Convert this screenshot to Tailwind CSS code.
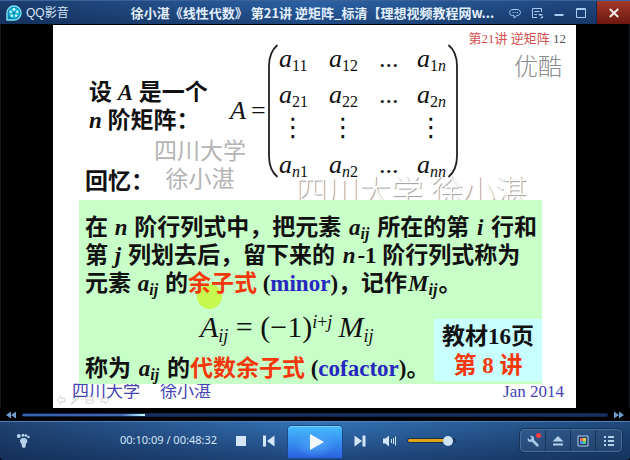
<!DOCTYPE html>
<html lang="zh-CN">
<head>
<meta charset="utf-8">
<meta name="viewport" content="width=device-width, initial-scale=1">
<title>QQ影音</title>
<script src="https://cdn.jsdelivr.net/npm/@tailwindcss/browser@4"></script>
</head>
<body class="flex min-h-screen flex-col overflow-hidden bg-black font-['Liberation_Sans','Noto_Sans_CJK_SC',sans-serif]">

<!-- Title bar -->
<header class="flex h-6 items-center border-t border-[#3a6299] bg-[linear-gradient(to_bottom,transparent,rgba(8,24,60,0.35)),linear-gradient(to_right,#1b3c6c,#2c63a6_50%,#1c4377)]">
  <div class="flex w-32 shrink-0 items-center gap-1 pl-[6px]">
    <svg class="size-4" viewBox="0 0 16 16" aria-hidden="true">
      <path d="M1 15V8a7 7 0 1 1 7 7z" fill="#0b7fae" stroke="#7be6f7" stroke-width="1.4"/>
      <circle cx="8" cy="8" r="5.4" fill="#12b5dc"/>
      <g fill="#d9fbff"><circle cx="8" cy="4.4" r="1.3"/><circle cx="11.4" cy="6.8" r="1.3"/><circle cx="10.2" cy="10.8" r="1.3"/><circle cx="5.8" cy="10.8" r="1.3"/><circle cx="4.6" cy="6.8" r="1.3"/></g>
      <circle cx="8" cy="8" r=".9" fill="#07506f"/>
    </svg>
    <span class="text-xs leading-5 text-[#d5e6fa]">QQ影音</span>
  </div>
  <h1 class="min-w-0 flex-1 truncate text-center font-['Noto_Sans_CJK_SC',sans-serif] text-[13px] leading-5 font-bold text-[#e2effc]">徐小湛《线性代数》 第21讲 逆矩阵_标清【理想视频教程网w...</h1>
  <div class="flex h-full shrink-0 items-center pl-[7px] text-[#a9cdf0]">
    <button aria-label="反馈" class="flex h-full w-[22px] items-center justify-center"><svg class="size-3" viewBox="0 0 12 12" fill="none" stroke="currentColor"><path d="M3.500 8.500C1.500 8.500.6 7.300.6 5.500S1.800 2.500 4 2.500h4c2.200 0 3.400 1.200 3.400 3S10 8.500 8 8.500L5 11V8.500z"/><path d="M3.500 5.500h1m1.200 0h1m1.200 0h1"/></svg></button>
    <button aria-label="菜单" class="flex h-full w-[22px] items-center justify-center"><svg class="size-3" viewBox="0 0 12 12" fill="none" stroke="currentColor"><path d="M10.500 5V1.500h-9v9H6M3.500 4.500h5M3.500 7.500h2.500"/><path d="M7 7h5l-2.500 2.200zM9 11.500L12 11V8.500z" fill="currentColor" stroke="none"/></svg></button>
    <button aria-label="最小化" class="flex h-full w-[22px] items-center justify-center"><svg class="size-3" viewBox="0 0 12 12"><path d="M1.500 7h9v2h-9z" fill="currentColor"/></svg></button>
    <button aria-label="最大化" class="flex h-full w-[22px] items-center justify-center"><svg class="size-3" viewBox="0 0 12 12" fill="none" stroke="currentColor"><path d="M1.500 1.500h9v9h-9zM1.500 2.500h9"/></svg></button>
    <button aria-label="关闭" class="ml-1 flex h-full w-[34px] items-center justify-center border-l border-[#142c52] bg-gradient-to-b from-[#a1392a] to-[#6d1710]"><svg class="size-3" viewBox="0 0 12 12" fill="none" stroke="#f3ece9" stroke-width="2"><path d="M1.800 2l8.400 8M10.200 2L1.800 10"/></svg></button>
  </div>
</header>

<!-- Video frame -->
<main class="flex flex-1 flex-col border-x border-[#14181f] pt-px">
  <article class="relative mr-[53px] ml-[52px] flex flex-1 flex-col overflow-hidden bg-[#fefffe] font-['Liberation_Serif','Noto_Sans_CJK_SC',serif] text-[#111]">
    <section class="relative flex h-[175px]">
      <p class="absolute top-[149px] left-[242px] text-[32px] leading-9 font-light whitespace-nowrap text-white [text-shadow:1px_1px_1px_#999]">四川大学 徐小湛</p>
      <p class="absolute top-[113px] left-[101px] text-center text-[23px] leading-7 text-[#b4b4b4]">四川大学<br>徐小湛</p>

      <div class="w-[177px] shrink-0 pt-[54px] pl-8 text-[23px] leading-7 font-bold whitespace-nowrap">
        <p class="pl-1">设 <i>A</i> 是一个</p>
        <p class="pl-1"><i>n</i> 阶矩阵：</p>
        <p class="pt-[33px]">回忆：</p>
      </div>

      <div class="relative mt-[19px] flex h-[134px] items-center text-[26px] leading-6">
        <span class="w-[37px] whitespace-nowrap"><i>A</i>&thinsp;=</span>
        <svg class="h-[134px] w-3" viewBox="0 0 12 134" fill="none" stroke="#222" stroke-width="1.800" aria-hidden="true"><path d="M10.500 1C4.500 6 2 12 2 22v90c0 10 2.500 16 8.500 21"/></svg>
        <div class="grid h-full grid-cols-[50px_50px_38px_30px] grid-rows-[36px_32px_38px_25px] items-start pt-[3px] [&_sub]:text-base">
          <span><i>a</i><sub>11</sub></span><span><i>a</i><sub>12</sub></span><span>...</span><span><i>a</i><sub>1<i>n</i></sub></span>
          <span><i>a</i><sub>21</sub></span><span><i>a</i><sub>22</sub></span><span>...</span><span><i>a</i><sub>2<i>n</i></sub></span>
          <span class="pl-px font-['DejaVu_Sans']">⋮</span><span class="pl-px font-['DejaVu_Sans']">⋮</span><span></span><span class="pl-px font-['DejaVu_Sans']">⋮</span>
          <span><i>a</i><sub><i>n</i>1</sub></span><span><i>a</i><sub><i>n</i>2</sub></span><span>...</span><span><i>a</i><sub><i>nn</i></sub></span>
        </div>
        <svg class="h-[134px] w-3" viewBox="0 0 12 134" fill="none" stroke="#222" stroke-width="1.800" aria-hidden="true"><path d="M1.500 1C7.500 6 10 12 10 22v90c0 10-2.500 16-8.500 21"/></svg>
      </div>

      <div class="absolute top-1 right-[10px] flex flex-col items-end">
        <p class="text-[13px] leading-5 text-[#555]"><span class="text-[#d4504c]">第21讲 逆矩阵</span> 12</p>
        <p class="pr-1 font-['Noto_Sans_CJK_SC',sans-serif] text-2xl leading-8 font-light text-[#8a8a8a]">优酷</p>
      </div>
    </section>

    <section class="relative z-10 mr-[34px] ml-[26px] h-[184px] bg-[#c8ffc8] pt-[14px] pl-[6px] text-[23px] leading-7 font-bold whitespace-nowrap [&_sub]:text-base">
      <span class="absolute top-[84px] left-[118px] size-[25px] rounded-full bg-[#c6f84f]"></span>
      <p>在 <i class="mx-px">n</i> 阶行列式中，把元素 <i class="mx-[2px]">a<sub>ij</sub></i> 所在的第 <i class="mx-[2px]">i</i> 行和</p>
      <p>第 <i class="mx-px">j</i> 列划去后，留下来的 <i class="mx-[2px]">n</i>-1 阶行列式称为</p>
      <p class="relative">元素 <i class="mx-px">a<sub>ij</sub></i> 的<span class="text-[#f5380c]">余子式</span> (<span class="text-[#2626c0]">minor</span>)，记作<i class="mx-px">M<sub>ij</sub></i>。</p>
      <p class="pl-[115px] text-[30px] leading-[57px] font-normal [&_sub]:text-lg [&_sup]:text-lg"><i>A<sub>ij</sub></i> = (−1)<sup><i>i</i>+<i>j</i></sup>&thinsp;<i>M<sub>ij</sub></i></p>
      <p>称为 <i class="mx-[2px]">a<sub>ij</sub></i> 的<span class="text-[#f5380c]">代数余子式</span> (<span class="text-[#2626c0]">cofactor</span>)。</p>
      <aside class="absolute right-0 bottom-[3px] w-[108px] bg-[#c8ffff] pt-[3px] pb-px text-center leading-[29px]">
        <p>教材16页</p>
        <p class="text-[#f5380c]">第 8 讲</p>
      </aside>
    </section>

    <footer class="relative flex flex-1 items-start justify-between pr-3 pl-[19px] text-[17px] leading-4 text-[#4343b4]">
      <span>四川大学<span class="pl-5">徐小湛</span></span>
      <span>Jan 2014</span>
      <svg class="absolute top-[10px] left-[3px] h-3 w-[54px]" viewBox="0 0 54 12" fill="#fff" stroke="#d4d4d4" aria-hidden="true"><path d="M1 6l4-4v2.500h4v3H5V10zM15 10l7-7 1 1-7 6zM30 3h7v6h-7zM30 6h7M53 6l-4-4v2.500h-4v3h4V10z"/></svg>
    </footer>
  </article>
</main>

<!-- Seek bar -->
<div class="flex h-[13px] items-center gap-[6px] px-[6px]">
  <button aria-label="快退" class="w-[10px] shrink-0 text-[#6f9dce]"><svg class="h-2 w-[10px]" viewBox="0 0 10 8" fill="currentColor"><path d="M5 .5v7L0 4zM10 .5v7L5 4z"/></svg></button>
  <input type="range" aria-label="播放进度" min="0" max="2912" value="609" class="h-1 min-w-0 flex-1 appearance-none rounded-sm border-y border-[#10264a] bg-[linear-gradient(to_right,#3560ae,#4166b4_17%,#b8f2ff_20.500%,#dcfaff_21%,#17305f_21%,#17305f)] [&::-webkit-slider-thumb]:size-1 [&::-webkit-slider-thumb]:appearance-none">
  <button aria-label="快进" class="w-[10px] shrink-0 text-[#6f9dce]"><svg class="h-2 w-[10px]" viewBox="0 0 10 8" fill="currentColor"><path d="M0 .5v7L5 4zM5 .5v7L10 4z"/></svg></button>
</div>

<!-- Transport controls -->
<div class="grid h-[39px] grid-cols-[1fr_56px_1fr] rounded-b border-t border-[#4a7fbd] bg-[linear-gradient(to_bottom,transparent,rgba(14,32,72,0.55)),linear-gradient(to_right,#1f4270,#3474b8_50%,#1f4878)] text-[#d3e6f8]">
  <div class="flex items-center pr-3 pb-px pl-4">
    <button aria-label="工具脚印"><svg class="h-4 w-[14px]" viewBox="0 0 14 16" fill="#b9d3ee"><circle cx="2.800" cy="3" r="1.900"/><circle cx="7" cy="2.300" r="1.500"/><circle cx="10" cy="2.600" r="1.300"/><circle cx="12.400" cy="4" r="1.200"/><path d="M4 8c0-2 1.400-3 3.600-3s3.700 1.100 3.700 3-1.600 2.400-1.600 3.800.2 3.200-1.900 3.200-2-2-2-3.200S4 9.600 4 8z"/></svg></button>
    <span class="ml-auto font-['Noto_Sans'] text-[11px] whitespace-nowrap">00:10:09 / 00:48:32</span>
    <button aria-label="停止" class="ml-[18px]"><svg class="size-3" viewBox="0 0 12 12" fill="currentColor"><path d="M1 1h10v10H1z"/></svg></button>
    <button aria-label="上一个" class="ml-4"><svg class="size-3" viewBox="0 0 12 12" fill="currentColor"><path d="M0 .5h3v11H0zM11.500.5v11L4 6z"/></svg></button>
  </div>
  <button aria-label="播放" class="mt-[3px] mb-px flex items-center justify-center rounded-t border border-[#1b4a8c] bg-[radial-gradient(ellipse_at_50%_55%,#4da5f8,transparent_55%),linear-gradient(to_bottom,#45bcff,#2a62e0)] shadow-[inset_0_1px_0_#7ad4ff]"><svg class="ml-1 h-4 w-[14px]" viewBox="0 0 14 16" fill="#f2f9ff"><path d="M0 0l14 8-14 8z"/></svg></button>
  <div class="flex items-center pr-2 pb-px pl-[11px]">
    <button aria-label="下一个"><svg class="size-3" viewBox="0 0 12 12" fill="currentColor"><path d="M8.500.5h3v11h-3zM.5.5v11L8 6z"/></svg></button>
    <button aria-label="音量" class="ml-[17px]"><svg class="h-3 w-[14px]" viewBox="0 0 14 12" fill="currentColor"><path d="M0 3.500h2.500L6 .5v11L2.500 8.500H0z"/><path d="M8.500 4v4M10.500 3v6M12.500 1.500v9" stroke="currentColor" fill="none"/></svg></button>
    <input type="range" aria-label="音量大小" min="0" max="100" value="95" class="ml-[10px] h-[5px] w-[49px] appearance-none rounded-full border border-[#1b2f4f] bg-[linear-gradient(to_right,#e3a413_80%,#1c3f72_80%)] [&::-webkit-slider-thumb]:size-[10px] [&::-webkit-slider-thumb]:appearance-none [&::-webkit-slider-thumb]:rounded-full [&::-webkit-slider-thumb]:bg-[#cfe3f6]">
    <div class="ml-auto flex h-[23px] divide-x divide-[#173358] rounded-sm border border-[#456f9f] bg-white/5 outline outline-[#173358] [&>button]:flex [&>button]:w-[25px] [&>button]:items-center [&>button]:justify-center">
      <button aria-label="影音工具箱" class="relative"><svg class="size-3" viewBox="0 0 12 12" fill="#a9c9e8"><path d="M3 1L5 3 3 5 1 3C0 5 1 7 3.500 7L5 6.800l4.400 4.400a1.300 1.300 0 0 0 1.900-1.900L7 5V3.500C7 1.500 5 .2 3 1z"/></svg><span class="absolute top-[3px] right-1 size-[5px] rounded-full bg-[#ff3b40]"></span></button>
      <button aria-label="打开文件"><svg class="h-3 w-3" viewBox="0 0 12 12" fill="#b4d0eb"><path d="M6 1l5.500 5.500H.5zM1 8.500h10v2H1z"/></svg></button>
      <button aria-label="画面调节"><svg class="size-3" viewBox="0 0 12 12"><path d="M1 1h10v10H1z" fill="#1d3e6b" stroke="#b4d0eb"/><path d="M3 3h3v3H3z" fill="#f06a45"/><path d="M6 3h3v3H6z" fill="#e8d04a"/><path d="M3 6h3v3H3z" fill="#4a8ff0"/><path d="M6 6h3v3H6z" fill="#55d07a"/></svg></button>
      <button aria-label="播放列表"><svg class="size-3" viewBox="0 0 12 12" fill="#b4d0eb"><path d="M1 1h2v2H1zM5 1h6v2H5zM1 5h2v2H1zM5 5h6v2H5zM1 9h2v2H1zM5 9h6v2H5z"/></svg></button>
    </div>
  </div>
</div>
</body>
</html>
